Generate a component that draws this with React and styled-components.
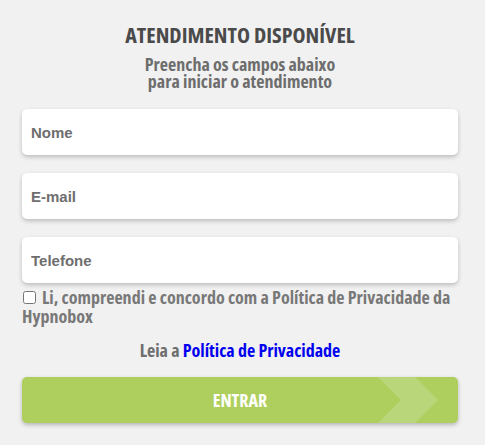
import styled, { createGlobalStyle } from "styled-components";

const GlobalStyle = createGlobalStyle`
  html, body {
    margin: 0;
    padding: 0;
    background: #f1f1f1;
  }
`;

const Form = styled.form`
  width: 485px;
  height: 445px;
  box-sizing: border-box;
  padding: 20px 27px 0 22px;
  font-family: "Open Sans", "Liberation Sans", sans-serif;
  font-stretch: 75%;
  display: flex;
  flex-direction: column;
`;

const Title = styled.h2`
  margin: 0;
  text-align: center;
  font-size: 22px;
  font-weight: 700;
  line-height: 28px;
  color: #4a4a4a;
`;

const Subtitle = styled.p`
  margin: 8px 0 0;
  text-align: center;
  font-size: 18px;
  font-weight: 700;
  line-height: 17px;
  color: #6d6d6d;
`;

const Fields = styled.div`
  display: flex;
  flex-direction: column;
  gap: 18px;
  margin-top: 19px;
`;

const Input = styled.input`
  height: 46px;
  box-sizing: border-box;
  border: none;
  border-radius: 5px;
  background: #fff;
  box-shadow: 0 2px 4px rgba(0, 0, 0, 0.22);
  padding: 0 9px;
  font-family: "Liberation Sans", Arial, sans-serif;
  font-size: 15px;
  font-weight: 700;
  color: #555;
  outline: none;
  &::placeholder {
    color: #6e6e6e;
  }
`;

const Consent = styled.label`
  display: block;
  margin-top: 5px;
  font-size: 18px;
  font-weight: 700;
  line-height: 19px;
  color: #787878;
  input {
    margin: 0 6px 0 1px;
    width: 13px;
    height: 13px;
    vertical-align: 0;
  }
`;

const Policy = styled.p`
  margin: 14px 0 0;
  text-align: center;
  font-size: 18px;
  font-weight: 700;
  line-height: 20px;
  color: #6d6d6d;
  a {
    color: #0000ee;
    text-decoration: none;
  }
`;

const Submit = styled.button`
  position: relative;
  overflow: hidden;
  margin-top: 17px;
  height: 46px;
  border: none;
  border-radius: 5px;
  background: #aecf5e;
  box-shadow: 0 2px 4px rgba(0, 0, 0, 0.25);
  color: #fff;
  font-family: inherit;
  font-stretch: 75%;
  font-size: 18px;
  font-weight: 700;
  cursor: pointer;
  span {
    position: relative;
  }
`;

const Chevron = styled.svg`
  position: absolute;
  top: 0;
  right: 20px;
  width: 60px;
  height: 46px;
`;

export default function App() {
  return (
    <>
      <GlobalStyle />
      <Form onSubmit={(e) => e.preventDefault()}>
        <Title>ATENDIMENTO DISPONÍVEL</Title>
        <Subtitle>
          Preencha os campos abaixo
          <br />
          para iniciar o atendimento
        </Subtitle>
        <Fields>
          <Input type="text" placeholder="Nome" autoFocus />
          <Input type="email" placeholder="E-mail" />
          <Input type="tel" placeholder="Telefone" />
        </Fields>
        <Consent>
          <input type="checkbox" />
          Li, compreendi e concordo com a Política de Privacidade da Hypnobox
        </Consent>
        <Policy>
          Leia a <a href="#">Política de Privacidade</a>
        </Policy>
        <Submit type="submit">
          <Chevron viewBox="0 0 60 46">
            <polygon points="0,0 37,0 60,23 37,46 0,46 23,23" fill="#bad67a" />
          </Chevron>
          <span>ENTRAR</span>
        </Submit>
      </Form>
    </>
  );
}
